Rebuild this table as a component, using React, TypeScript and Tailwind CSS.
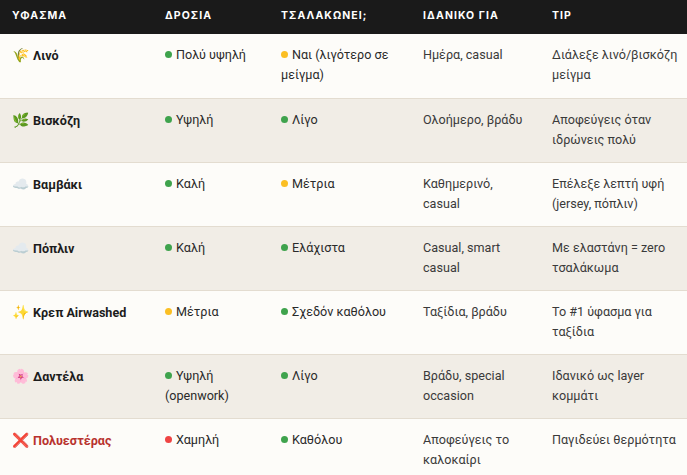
import React from "react";

type Dot = "g" | "y" | "r";
type Row = {
  emoji: string;
  name: string;
  bad?: boolean;
  breath: [Dot, string];
  wrinkle: [Dot, string];
  ideal: string;
  tip: string;
};

const rows: Row[] = [
  { emoji: "🌾", name: "Λινό", breath: ["g", "Πολύ υψηλή"], wrinkle: ["y", "Ναι (λιγότερο σε μείγμα)"], ideal: "Ημέρα, casual", tip: "Διάλεξε λινό/βισκόζη μείγμα" },
  { emoji: "🌿", name: "Βισκόζη", breath: ["g", "Υψηλή"], wrinkle: ["g", "Λίγο"], ideal: "Ολοήμερο, βράδυ", tip: "Αποφεύγεις όταν ιδρώνεις πολύ" },
  { emoji: "☁️", name: "Βαμβάκι", breath: ["g", "Καλή"], wrinkle: ["y", "Μέτρια"], ideal: "Καθημερινό, casual", tip: "Επέλεξε λεπτή υφή (jersey, πόπλιν)" },
  { emoji: "☁️", name: "Πόπλιν", breath: ["g", "Καλή"], wrinkle: ["g", "Ελάχιστα"], ideal: "Casual, smart casual", tip: "Με ελαστάνη = zero τσαλάκωμα" },
  { emoji: "✨", name: "Κρεπ Airwashed", breath: ["y", "Μέτρια"], wrinkle: ["g", "Σχεδόν καθόλου"], ideal: "Ταξίδια, βράδυ", tip: "Το #1 ύφασμα για ταξίδια" },
  { emoji: "🌸", name: "Δαντέλα", breath: ["g", "Υψηλή (openwork)"], wrinkle: ["g", "Λίγο"], ideal: "Βράδυ, special occasion", tip: "Ιδανικό ως layer κομμάτι" },
  { emoji: "❌", name: "Πολυεστέρας", bad: true, breath: ["r", "Χαμηλή"], wrinkle: ["g", "Καθόλου"], ideal: "Αποφεύγεις το καλοκαίρι", tip: "Παγιδεύει θερμότητα" },
];

function DotCell({ d }: { d: [Dot, string] }) {
  const cls =
    d[0] === "g" ? "bg-[#3fa34d]" : d[0] === "y" ? "bg-[#fbbf24]" : "bg-[#ef4444]";
  return (
    <span>
      <span className={`inline-block w-[7px] h-[7px] rounded-full mr-[4px] align-[1px] ${cls}`} />
      {d[1]}
    </span>
  );
}

export default function App() {
  return (
    <div
      className="w-[687px] h-[475px] overflow-hidden bg-[#fdfcf9]"
      style={{ fontFamily: "Roboto, 'Noto Sans', sans-serif" }}
    >
      <table className="w-[687px] table-fixed border-collapse text-[12.6px] leading-[20px] text-[#2a2a2a]">
        <colgroup>
          <col className="w-[153px]" />
          <col className="w-[116px]" />
          <col className="w-[142px]" />
          <col className="w-[129px]" />
          <col className="w-[147px]" />
        </colgroup>
        <thead>
          <tr className="bg-[#1a1a1a] text-white">
            {["Υφασμα", "Δροσια", "Τσαλακωνει;", "Ιδανικο για", "Tip"].map((h) => (
              <th
                key={h}
                className="text-left uppercase font-bold text-[10.5px] tracking-[0.1em] leading-[16px] px-3 pt-[8px] pb-[10px] align-middle"
                style={{ fontFamily: "Inter, sans-serif" }}
              >
                {h}
              </th>
            ))}
          </tr>
        </thead>
        <tbody>
          {rows.map((r, i) => (
            <tr
              key={i}
              className={`${i % 2 === 0 ? "bg-[#fdfcf9]" : "bg-[#f1ede6]"} border-b border-[#e3dcd0] h-[64px]`}
            >
              <td className="px-3 pt-[11px] pb-[12px] align-top">
                <span className={`font-bold ${r.bad ? "text-[#b8322e]" : "text-[#1c1c1c]"}`}>
                  <span className="mr-[4px] font-normal text-[14px]">{r.emoji}</span>
                  {r.name}
                </span>
              </td>
              <td className="px-3 pt-[11px] pb-[12px] align-top">
                <DotCell d={r.breath} />
              </td>
              <td className="px-3 pt-[11px] pb-[12px] align-top">
                <DotCell d={r.wrinkle} />
              </td>
              <td className="px-3 pt-[11px] pb-[12px] align-top text-[#3a3a3a]">{r.ideal}</td>
              <td className="pl-3 pr-2 pt-[11px] pb-[12px] align-top text-[#3a3a3a]">{r.tip}</td>
            </tr>
          ))}
        </tbody>
      </table>
    </div>
  );
}
